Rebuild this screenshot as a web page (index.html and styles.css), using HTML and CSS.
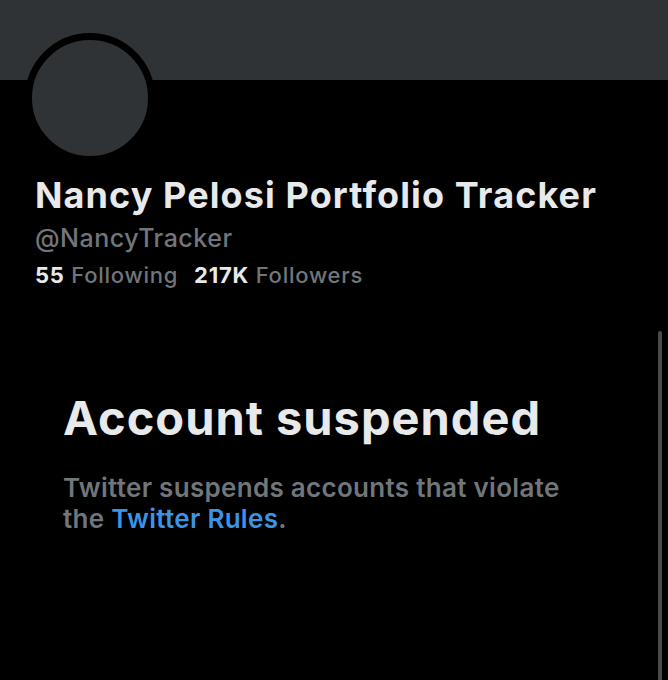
FILE: index.html
```html
<!DOCTYPE html>
<html lang="en">
<head>
    <meta charset="UTF-8">
    <meta name="viewport" content="width=device-width, initial-scale=1.0">
    <title>@NancyTracker</title>
    <link rel="stylesheet" href="styles.css">
</head>
<body>
    <div class="profile">
        <div class="banner"></div>
        <div class="avatar_row">
            <div class="avatar"></div>
        </div>
        <div class="info">
            <h1 class="name">Nancy Pelosi Portfolio Tracker</h1>
            <div class="handle">@NancyTracker</div>
            <div class="stats">
                <span><strong>55</strong> Following</span>
                <span><strong>217K</strong> Followers</span>
            </div>
        </div>
        <div class="suspended">
            <h2>Account suspended</h2>
            <p>Twitter suspends accounts that violate<br>the <a href="#">Twitter Rules</a>.</p>
        </div>
        <div class="scrollbar"></div>
    </div>
</body>
</html>
```

FILE: styles.css
```css
html, body { margin:0; padding:0; background:#000; }
body { font-family: Inter, "Liberation Sans", Arial, sans-serif; color:#e7e9ea; }
.profile { position:relative; width:668px; height:680px; overflow:hidden; }
.banner { height:80px; background:#2f3336; }
.avatar_row { display:flex; height:94px; padding-left:25px; }
.avatar { width:116px; height:116px; flex:none; border-radius:50%; background:#2f3336;
    border:7px solid #000; margin-top:-47px; }
.info { padding-left:35px; }
.name { margin:0; font-size:36px; line-height:42px; font-weight:bold; letter-spacing:1.1px; }
.handle { color:#71767b; font-size:25px; line-height:30px; margin-top:7px; font-weight:500; letter-spacing:0.5px; }
.stats { font-size:22px; line-height:28px; margin-top:8px; color:#71767b; display:flex; gap:16px;
    font-weight:500; letter-spacing:0.75px; }
.stats strong { color:#e7e9ea; font-weight:bold; }
.suspended { padding:103px 0 0 63px; }
.suspended h2 { margin:0; font-size:47px; line-height:52px; font-weight:bold; letter-spacing:1px; }
.suspended p { margin:28px 0 0; font-size:26px; line-height:31px; color:#71767b; font-weight:600; letter-spacing:0.3px; }
.suspended a { color:#3b94e6; text-decoration:none; }
.scrollbar { position:absolute; right:6px; top:331px; width:4px; height:360px;
    border-radius:2px; background:#4a4a4a; }
```
